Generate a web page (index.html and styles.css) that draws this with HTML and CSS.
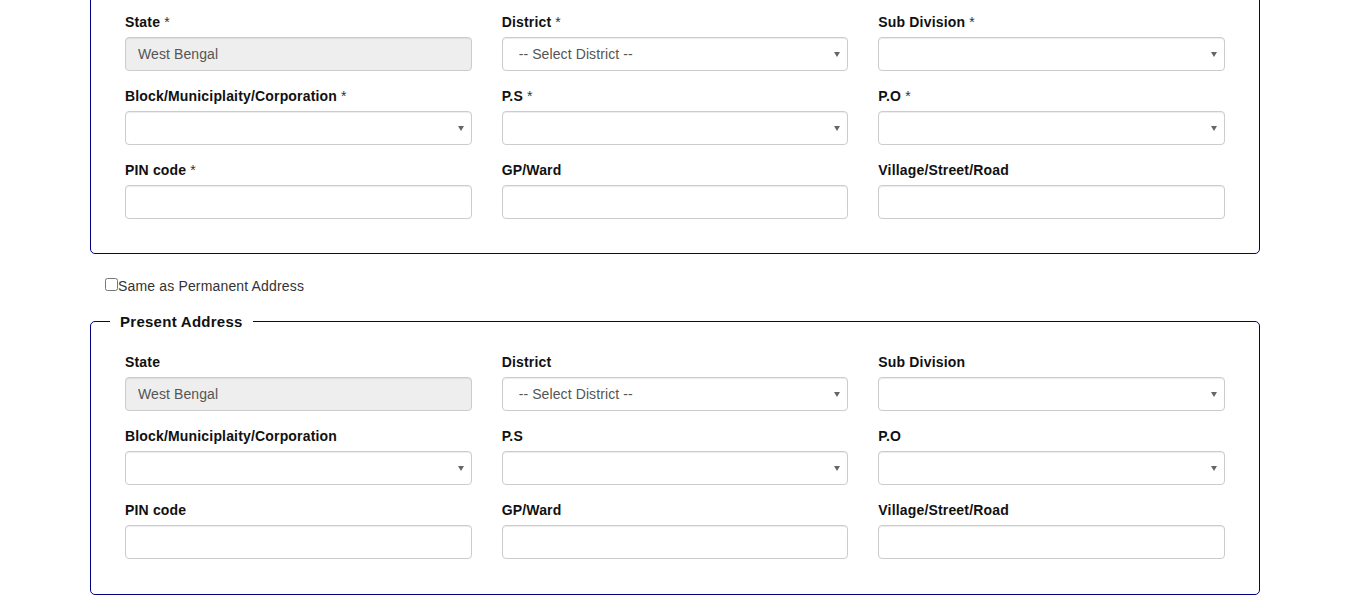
FILE: index.html
```html
<!DOCTYPE html>
<html>
<head>
<meta charset="utf-8">
<link rel="stylesheet" href="styles.css">
</head>
<body>
<div class="container">
  <fieldset class="addr addr--first">
    <div class="grid">
      <div class="fg"><label>State <span class="req">*</span></label><input class="ctl" type="text" value="West Bengal" disabled></div>
      <div class="fg"><label>District <span class="req">*</span></label><div class="sel"><select class="ctl"><option>-- Select District --</option></select></div></div>
      <div class="fg"><label>Sub Division <span class="req">*</span></label><div class="sel"><select class="ctl"><option></option></select></div></div>
      <div class="fg"><label>Block/Municiplaity/Corporation <span class="req">*</span></label><div class="sel"><select class="ctl"><option></option></select></div></div>
      <div class="fg"><label>P.S <span class="req">*</span></label><div class="sel"><select class="ctl"><option></option></select></div></div>
      <div class="fg"><label>P.O <span class="req">*</span></label><div class="sel"><select class="ctl"><option></option></select></div></div>
      <div class="fg"><label>PIN code <span class="req">*</span></label><input class="ctl" type="text"></div>
      <div class="fg"><label>GP/Ward</label><input class="ctl" type="text"></div>
      <div class="fg"><label>Village/Street/Road</label><input class="ctl" type="text"></div>
    </div>
  </fieldset>

  <div class="same"><input type="checkbox" id="same"><label for="same">Same as Permanent Address</label></div>

  <fieldset class="addr">
    <legend>Present Address</legend>
    <div class="grid">
      <div class="fg"><label>State</label><input class="ctl" type="text" value="West Bengal" disabled></div>
      <div class="fg"><label>District</label><div class="sel"><select class="ctl"><option>-- Select District --</option></select></div></div>
      <div class="fg"><label>Sub Division</label><div class="sel"><select class="ctl"><option></option></select></div></div>
      <div class="fg"><label>Block/Municiplaity/Corporation</label><div class="sel"><select class="ctl"><option></option></select></div></div>
      <div class="fg"><label>P.S</label><div class="sel"><select class="ctl"><option></option></select></div></div>
      <div class="fg"><label>P.O</label><div class="sel"><select class="ctl"><option></option></select></div></div>
      <div class="fg"><label>PIN code</label><input class="ctl" type="text"></div>
      <div class="fg"><label>GP/Ward</label><input class="ctl" type="text"></div>
      <div class="fg"><label>Village/Street/Road</label><input class="ctl" type="text"></div>
    </div>
  </fieldset>
</div>
</body>
</html>
```
FILE: styles.css
```css
* { box-sizing: border-box; }
html, body { margin: 0; padding: 0; background: #fff; overflow: hidden; }
body {
  font-family: "Liberation Sans", Arial, sans-serif;
  font-size: 14px;
  line-height: 20px;
  color: #333;
}
.container {
  width: 1170px;
  margin: 0 auto;
}
.addr {
  margin: 0;
  border: 1px solid #000080;
  border-radius: 5px;
  padding: 21px 34px 20px;
  min-width: 0;
}
.addr--first { margin-top: -10px; padding-bottom: 19px; }
.addr legend {
  margin-left: -15px;
  padding: 0 10px;
  font-size: 15px;
  font-weight: bold;
  line-height: 20px;
  letter-spacing: 0.27px;
  color: #111;
  position: relative;
  top: 1px;
}
.grid {
  display: grid;
  grid-template-columns: repeat(3, 1fr);
  column-gap: 30px;
}
.fg { margin-bottom: 15px; }
.fg label {
  display: block;
  margin-bottom: 5px;
  font-weight: bold;
  letter-spacing: 0.17px;
  color: #111;
}
.fg .req { font-weight: normal; color: #333; }
.ctl {
  display: block;
  width: 100%;
  height: 34px;
  margin: 0;
  padding: 6px 12px;
  font-family: inherit;
  font-size: 14px;
  line-height: 20px;
  letter-spacing: 0.1px;
  color: #555;
  background: #fff;
  border: 1px solid #ccc;
  border-radius: 4px;
  box-shadow: inset 0 1px 1px rgba(0,0,0,.075);
  outline: none;
}
.ctl:disabled { background: #eee; color: #555; }
.sel { position: relative; }
.sel select {
  -webkit-appearance: none;
  appearance: none;
  padding-left: 16px;
}
.sel::after {
  content: "";
  position: absolute;
  right: 8px;
  top: 15px;
  border-left: 3px solid transparent;
  border-right: 3px solid transparent;
  border-top: 5px solid #666;
  pointer-events: none;
}
.same {
  margin: 22px 0 15px;
  padding-left: 15px;
  display: flex;
  align-items: center;
  height: 20px;
  color: #333;
  letter-spacing: 0.16px;
}
.same input {
  margin: 0;
  width: 13px;
  height: 13px;
  position: relative;
  top: -2px;
}
```
